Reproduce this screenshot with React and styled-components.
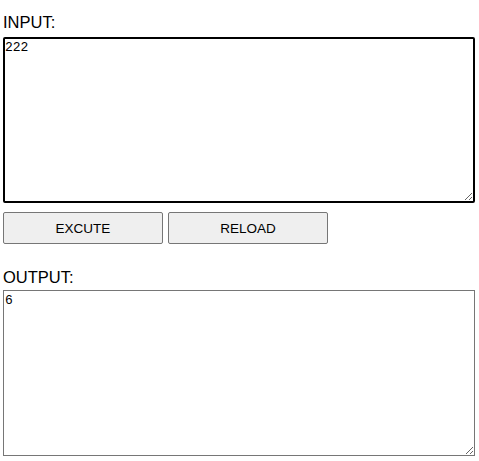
import React from "react";
import styled, { createGlobalStyle } from "styled-components";

const Global = createGlobalStyle`
  html, body { margin: 0; padding: 0; background: #fff; }
  body { font-family: "Liberation Sans", Arial, sans-serif; }
`;

const Page = styled.div`
  padding: 12px 3px 0 3px;
  display: flex;
  flex-direction: column;
`;

const Label = styled.div`
  font-family: "Liberation Sans", Arial, sans-serif;
  font-size: 16.5px;
  line-height: 20px;
  color: #000;
  margin-top: ${(p) => p.$top || 0}px;
  margin-bottom: ${(p) => p.$bottom || 5}px;
`;

const Area = styled.textarea`
  box-sizing: border-box;
  display: block;
  width: 472px;
  height: 166px;
  margin: 0;
  font-family: "Liberation Mono", "DejaVu Sans Mono", monospace;
  font-size: 13px;
  line-height: 15px;
  color: #000;
  background: #fff;
  border: ${(p) => (p.$focused ? "2px solid #000" : "1px solid #767676")};
  border-radius: ${(p) => (p.$focused ? "2px" : "0")};
  padding: ${(p) => (p.$focused ? "1px 0" : "2px 1px")};
  resize: both;
  outline: none;
`;

const Buttons = styled.div`
  display: flex;
  gap: 5px;
  margin-top: 9px;
`;

const Button = styled.button`
  box-sizing: border-box;
  width: 160px;
  height: 32px;
  margin: 0;
  padding: 0;
  background: #efefef;
  border: 1px solid #767676;
  border-radius: 2px;
  font-family: "Liberation Sans", Arial, sans-serif;
  font-size: 13.5px;
  color: #000;
`;

export default function App() {
  return (
    <>
      <Global />
      <Page>
        <Label>INPUT:</Label>
        <Area $focused defaultValue="222" />
        <Buttons>
          <Button>EXCUTE</Button>
          <Button>RELOAD</Button>
        </Buttons>
        <Label $top={23} $bottom={3}>OUTPUT:</Label>
        <Area defaultValue="6" />
      </Page>
    </>
  );
}
